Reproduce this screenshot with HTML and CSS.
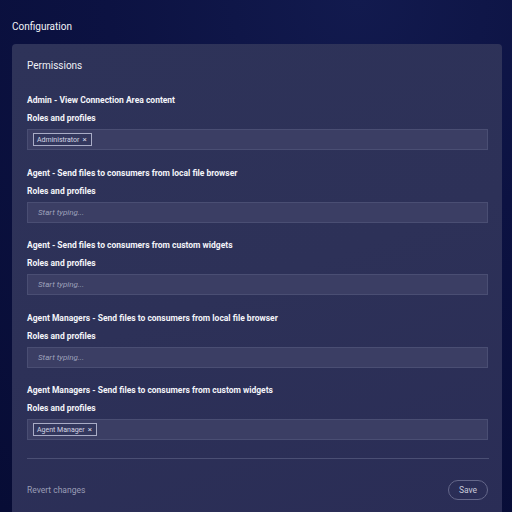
FILE: index.html
```html
<!DOCTYPE html>
<html>
<head>
<meta charset="utf-8">
<link rel="stylesheet" href="styles.css">
</head>
<body>
<div class="page">
  <h1 class="page-title">Configuration</h1>
  <div class="card">
    <h2 class="card-title">Permissions</h2>
    <div class="section">
      <div class="sec-title">Admin - View Connection Area content</div>
      <div class="sec-label">Roles and profiles</div>
      <div class="field"><span class="chip">Administrator <span class="x">×</span></span></div>
    </div>
    <div class="section">
      <div class="sec-title">Agent - Send files to consumers from local file browser</div>
      <div class="sec-label">Roles and profiles</div>
      <div class="field"><span class="ph">Start typing...</span></div>
    </div>
    <div class="section">
      <div class="sec-title">Agent - Send files to consumers from custom widgets</div>
      <div class="sec-label">Roles and profiles</div>
      <div class="field"><span class="ph">Start typing...</span></div>
    </div>
    <div class="section">
      <div class="sec-title">Agent Managers - Send files to consumers from local file browser</div>
      <div class="sec-label">Roles and profiles</div>
      <div class="field"><span class="ph">Start typing...</span></div>
    </div>
    <div class="section">
      <div class="sec-title">Agent Managers - Send files to consumers from custom widgets</div>
      <div class="sec-label">Roles and profiles</div>
      <div class="field"><span class="chip">Agent Manager <span class="x">×</span></span></div>
    </div>
    <div class="divider"></div>
    <div class="footer">
      <span class="revert">Revert changes</span>
      <span class="save">Save</span>
    </div>
  </div>
</div>
</body>
</html>
```

FILE: styles.css
```css
html, body {
  margin: 0;
  padding: 0;
  height: 100%;
}
body {
  background: radial-gradient(circle at 70% 0%, #121a4e 0%, #0c1242 40%, #070c35 100%);
  font-family: Roboto, "Liberation Sans", sans-serif;
  color: #ffffff;
  overflow: hidden;
}
.page {
  padding: 20px 10px 0 12px;
}
.page-title {
  margin: 0 0 10px 0;
  font-size: 10px;
  font-weight: 400;
  line-height: 14px;
  color: #f2f3f8;
}
.card {
  background: linear-gradient(160deg, #2e3359 0%, #2d3158 50%, #2a2d56 100%);
  border-radius: 4px;
  padding: 15px 14px 20px 15px;
  min-height: 433px;
}
.card-title {
  margin: 0 0 21px 0;
  font-size: 10px;
  font-weight: 400;
  line-height: 14px;
  color: #eef0f6;
}
.section {
  margin-bottom: 16.5px;
}
.section:last-of-type {
  margin-bottom: 0;
}
.sec-title, .sec-label {
  font-size: 8.5px;
  font-weight: 700;
  line-height: 12px;
  color: #f4f5fa;
}
.sec-title {
  margin-bottom: 6px;
}
.sec-label {
  margin-bottom: 5px;
}
.field {
  box-sizing: border-box;
  height: 21px;
  background: #3b3e64;
  border: 1px solid #4a4e73;
  padding: 3px 5px;
  display: flex;
  align-items: center;
}
.chip {
  box-sizing: border-box;
  height: 13px;
  display: inline-flex;
  align-items: center;
  border: 1px solid #a9acc6;
  background: #33375d;
  padding: 0 4px 0 3px;
  font-size: 7px;
  color: #d4d6e4;
}
.x {
  margin-left: 3px;
  font-size: 8px;
}
.ph {
  padding-left: 5px;
  font-size: 8px;
  font-style: italic;
  color: #9ea1bb;
}
.divider {
  height: 1px;
  background: #4b4f74;
  margin-top: 18px;
  margin-right: -1px;
}
.footer {
  display: flex;
  justify-content: space-between;
  align-items: center;
  padding-top: 21px;
}
.revert {
  font-size: 8.5px;
  color: #9a9db6;
}
.save {
  box-sizing: border-box;
  width: 40px;
  height: 20px;
  border: 1px solid #64678a;
  border-radius: 10px;
  display: flex;
  align-items: center;
  justify-content: center;
  font-size: 8.5px;
  color: #c9cbdb;
}
```
